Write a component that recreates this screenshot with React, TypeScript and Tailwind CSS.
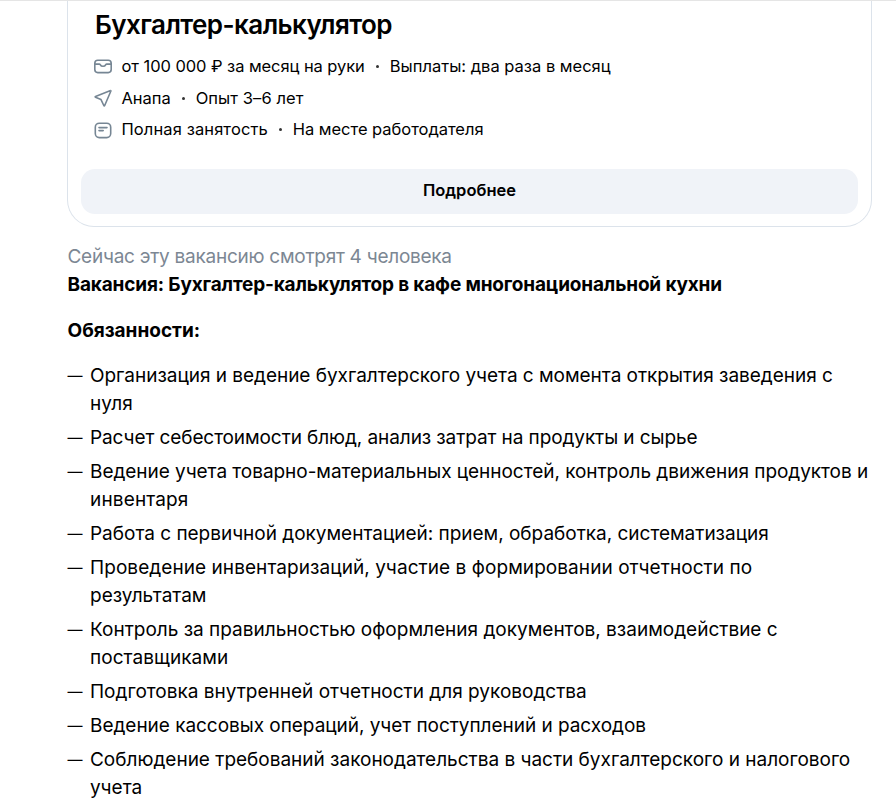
import type { ReactNode } from 'react';

const duties: { text: string; tracking: string }[][] = [
  [
    { text: 'Организация и ведение бухгалтерского учета с момента открытия заведения с', tracking: 'tracking-[-0.03px]' },
    { text: 'нуля', tracking: 'tracking-[0.1px]' },
  ],
  [{ text: 'Расчет себестоимости блюд, анализ затрат на продукты и сырье', tracking: 'tracking-[-0.09px]' }],
  [
    { text: 'Ведение учета товарно-материальных ценностей, контроль движения продуктов и', tracking: 'tracking-[-0.04px]' },
    { text: 'инвентаря', tracking: 'tracking-[0.15px]' },
  ],
  [{ text: 'Работа с первичной документацией: прием, обработка, систематизация', tracking: 'tracking-[-0.015px]' }],
  [
    { text: 'Проведение инвентаризаций, участие в формировании отчетности по', tracking: 'tracking-[0.065px]' },
    { text: 'результатам', tracking: 'tracking-[0px]' },
  ],
  [
    { text: 'Контроль за правильностью оформления документов, взаимодействие с', tracking: 'tracking-[0px]' },
    { text: 'поставщиками', tracking: 'tracking-[0.05px]' },
  ],
  [{ text: 'Подготовка внутренней отчетности для руководства', tracking: 'tracking-[0px]' }],
  [{ text: 'Ведение кассовых операций, учет поступлений и расходов', tracking: 'tracking-[-0.035px]' }],
  [
    { text: 'Соблюдение требований законодательства в части бухгалтерского и налогового', tracking: 'tracking-[-0.01px]' },
    { text: 'учета', tracking: 'tracking-[0px]' },
  ],
];

function Icon({ children }: { children: ReactNode }) {
  return (
    <svg className="mr-[8.5px] h-5 w-5 shrink-0" viewBox="0 0 20 20" fill="none" stroke="#768694" strokeWidth="1.6" strokeLinecap="round" strokeLinejoin="round">
      {children}
    </svg>
  );
}

function Dot() {
  return <span className="mx-[11px] h-[3px] w-[3px] shrink-0 rounded-full bg-[#333]" />;
}

export default function App() {
  return (
    <div className="h-[809px] w-[896px] overflow-hidden border-t border-[#e5e5e5] bg-white font-['Inter','Noto_Sans',sans-serif] whitespace-nowrap text-black">
      <section className="ml-[67px] flex h-[226px] w-[805px] flex-col rounded-b-[27px] border border-t-0 border-[#dce3eb] px-[13px]">
        <h1 className="mt-[7px] ml-[14px] text-[26px] leading-[34px] font-semibold tracking-[-0.56px]">Бухгалтер-калькулятор</h1>
        <div className="mt-2 ml-3 flex flex-col text-[16.5px]">
          <div className="flex h-8 items-center">
            <Icon>
              <rect x="1.8" y="4.2" width="16.4" height="12.4" rx="3" />
              <path d="M2 8.1h4.2c.6 0 .9.3 1.2.8.4.9 1.2 1.4 2.6 1.4s2.2-.5 2.6-1.4c.3-.5.6-.8 1.2-.8H18" />
            </Icon>
            <span className="tracking-[-0.07px]">от 100 000 ₽ за месяц на руки</span>
            <Dot />
            <span className="tracking-[0px]">Выплаты: два раза в месяц</span>
          </div>
          <div className="flex h-8 items-center">
            <Icon>
              <path d="M17.6 2.6 2.5 8.4c-.5.2-.5.7 0 .9l5.5 2.3 2.8 5.9c.2.5.7.5.9 0l6.2-14.5c.1-.3-.1-.5-.3-.4Z" />
            </Icon>
            <span className="tracking-[-0.05px]">Анапа</span>
            <Dot />
            <span className="tracking-[0.08px]">Опыт 3–6 лет</span>
          </div>
          <div className="flex h-[31px] items-center">
            <Icon>
              <rect x="2.3" y="3.2" width="15.4" height="14.4" rx="4" />
              <path d="M6 7.6h8M6 10.6h4.2" />
            </Icon>
            <span className="tracking-[0.1px]">Полная занятость</span>
            <Dot />
            <span className="tracking-[-0.03px]">На месте работодателя</span>
          </div>
        </div>
        <button className="mt-6 h-[45px] rounded-[14px] bg-[#f0f3f8] pb-[2px] text-[16.5px] font-semibold tracking-[0px]">Подробнее</button>
      </section>

      <main className="ml-[67.5px] pt-4 text-[19px] leading-[28px]">
        <p className="tracking-[-0.26px] text-[#7c8793]">Сейчас эту вакансию смотрят 4 человека</p>
        <p className="font-bold tracking-[-0.16px]">Вакансия: Бухгалтер-калькулятор в кафе многонациональной кухни</p>
        <p className="mt-[18px] font-bold">Обязанности:</p>
        <ul className="mt-[17px] flex flex-col gap-[6px]">
          {duties.map((lines) => (
            <li key={lines[0].text} className="flex">
              <span className="w-[22.5px] shrink-0 text-[15px]">—</span>
              <div>
                {lines.map((line) => (
                  <div key={line.text} className={line.tracking}>{line.text}</div>
                ))}
              </div>
            </li>
          ))}
        </ul>
      </main>
    </div>
  );
}
